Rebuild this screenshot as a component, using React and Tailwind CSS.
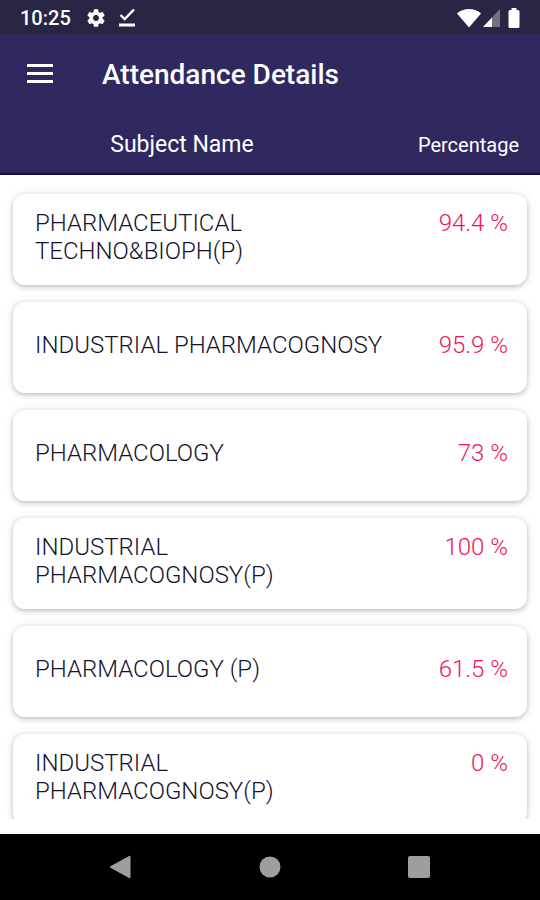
import React from "react";

const subjects = [
  { id: 1, name: "PHARMACEUTICAL TECHNO&BIOPH(P)", percentage: "94.4 %" },
  { id: 2, name: "INDUSTRIAL PHARMACOGNOSY", percentage: "95.9 %" },
  { id: 3, name: "PHARMACOLOGY", percentage: "73 %" },
  { id: 4, name: "INDUSTRIAL PHARMACOGNOSY(P)", percentage: "100 %" },
  { id: 5, name: "PHARMACOLOGY (P)", percentage: "61.5 %" },
  { id: 6, name: "INDUSTRIAL PHARMACOGNOSY(P)", percentage: "0 %" },
];

const StatusBar = () => (
  <div className="flex h-[34px] shrink-0 items-center justify-between bg-[#292645] px-5 pt-[2px] text-white">
    <div className="flex items-center">
      <span className="text-xl font-medium leading-6">10:25</span>
      <svg viewBox="0 0 24 24" className="ml-[14px] h-[22px] w-[22px]" fill="currentColor" aria-hidden="true">
        <path d="M19.14 12.94c.04-.3.06-.61.06-.94 0-.32-.02-.64-.07-.94l2.03-1.58a.49.49 0 0 0 .12-.61l-1.92-3.32a.49.49 0 0 0-.59-.22l-2.39.96c-.5-.38-1.03-.7-1.62-.94l-.36-2.54a.48.48 0 0 0-.48-.41h-3.84a.48.48 0 0 0-.47.41l-.36 2.54c-.59.24-1.13.57-1.62.94l-2.39-.96a.48.48 0 0 0-.59.22L2.74 8.87a.48.48 0 0 0 .12.61l2.03 1.58c-.05.3-.09.63-.09.94s.02.64.07.94l-2.03 1.58a.49.49 0 0 0-.12.61l1.92 3.32c.12.22.37.29.59.22l2.39-.96c.5.38 1.03.7 1.62.94l.36 2.54c.05.24.24.41.48.41h3.84c.24 0 .44-.17.47-.41l.36-2.54c.59-.24 1.13-.56 1.62-.94l2.39.96c.22.08.47 0 .59-.22l1.92-3.32a.48.48 0 0 0-.12-.61l-2.01-1.58zM12 15.2a3.2 3.2 0 1 1 0-6.4 3.2 3.2 0 0 1 0 6.4z" />
      </svg>
      <svg viewBox="0 0 16 20" className="ml-3 h-5 w-4" fill="none" stroke="currentColor" aria-hidden="true">
        <path d="M1.500 7l4.200 4L15 1.500" strokeWidth="2.4" />
        <path d="M0 17h16" strokeWidth="3" />
      </svg>
    </div>
    <div className="flex items-center">
      <svg viewBox="0 0 24 19" className="h-[19px] w-6" fill="currentColor" aria-hidden="true">
        <path d="M12 18.5L0 4.4C3.2 1.6 7.4 0 12 0s8.800 1.600 12 4.400z" />
      </svg>
      <svg viewBox="0 0 17 18" className="ml-[2px] h-[18px] w-[17px]" fill="currentColor" aria-hidden="true">
        <path d="M17 0v18H0z" opacity="0.35" />
        <path d="M9 8.500V18H0z" />
      </svg>
      <svg viewBox="0 0 12 20" className="ml-2 h-5 w-3" fill="currentColor" aria-hidden="true">
        <path d="M3.500 0h5v2H10a1.500 1.500 0 0 1 1.500 1.500v15A1.500 1.500 0 0 1 10 20H2a1.500 1.500 0 0 1-1.500-1.500v-15A1.500 1.500 0 0 1 2 2h1.500z" />
      </svg>
    </div>
  </div>
);

const AppBar = () => (
  <header className="flex h-20 shrink-0 items-center bg-[#2f295f] pl-[26px] text-white">
    <button type="button" aria-label="Open menu" className="flex h-10 w-7 items-center">
      <svg viewBox="0 0 28 20" className="h-5 w-7" fill="currentColor" aria-hidden="true">
        <path d="M1 0h26v3H1zM1 8h26v3H1zM1 16h26v3H1z" />
      </svg>
    </button>
    <h1 className="ml-12 pt-[2px] text-[28px] font-medium leading-8">Attendance Details</h1>
  </header>
);

const SubjectRow = ({ name, percentage }) => (
  <tr className="grid min-h-[91px] shrink-0 grid-cols-[1fr_112px] content-center items-baseline rounded-xl bg-white pb-[6px] pl-[22px] pr-[19px] text-2xl font-light leading-7 shadow-[0_2px_5px_rgba(0,0,0,0.2),0_0_10px_rgba(0,0,0,0.1)]">
    <td className="text-[#14122e]">{name}</td>
    <td className="text-right text-[#f0145a]">{percentage}</td>
  </tr>
);

const NavBar = () => (
  <nav className="flex h-[66px] shrink-0 items-center justify-center gap-[125px] bg-black text-[#9e9e9e]">
    <button type="button" aria-label="Back" className="h-6 w-6">
      <svg viewBox="0 0 24 24" className="h-6 w-6" fill="currentColor" aria-hidden="true">
        <path d="M21 1v22L1 12z" stroke="currentColor" strokeLinejoin="round" />
      </svg>
    </button>
    <button type="button" aria-label="Home" className="h-6 w-6">
      <svg viewBox="0 0 24 24" className="h-6 w-6" fill="currentColor" aria-hidden="true">
        <circle cx="12" cy="12" r="10.5" />
      </svg>
    </button>
    <button type="button" aria-label="Recent apps" className="h-6 w-6">
      <svg viewBox="0 0 24 24" className="h-6 w-6" fill="currentColor" aria-hidden="true">
        <rect x="1" y="1" width="22" height="22" rx="2" />
      </svg>
    </button>
  </nav>
);

const App = () => {
  return (
    <div className="flex h-screen flex-col bg-white font-['Roboto',sans-serif]">
      <StatusBar />
      <AppBar />
      <main className="flex min-h-0 flex-1 flex-col pb-[15px]">
        <table className="flex min-h-0 flex-1 flex-col">
          <thead className="block shrink-0 border-b-2 border-[#150b4a] bg-[#2f295f] text-white">
            <tr className="flex h-[59px] items-center justify-between pr-[21px] pt-[2px]">
              <th scope="col" className="w-[364px] text-center text-[23px] font-normal leading-7">Subject Name</th>
              <th scope="col" className="text-right text-xl font-normal leading-7">Percentage</th>
            </tr>
          </thead>
          <tbody className="flex min-h-0 flex-1 flex-col gap-[17px] overflow-hidden px-[13px] pt-[19px]">
            {subjects.map((subject) => (
              <SubjectRow key={subject.id} name={subject.name} percentage={subject.percentage} />
            ))}
          </tbody>
        </table>
      </main>
      <NavBar />
    </div>
  );
};

export default App;
